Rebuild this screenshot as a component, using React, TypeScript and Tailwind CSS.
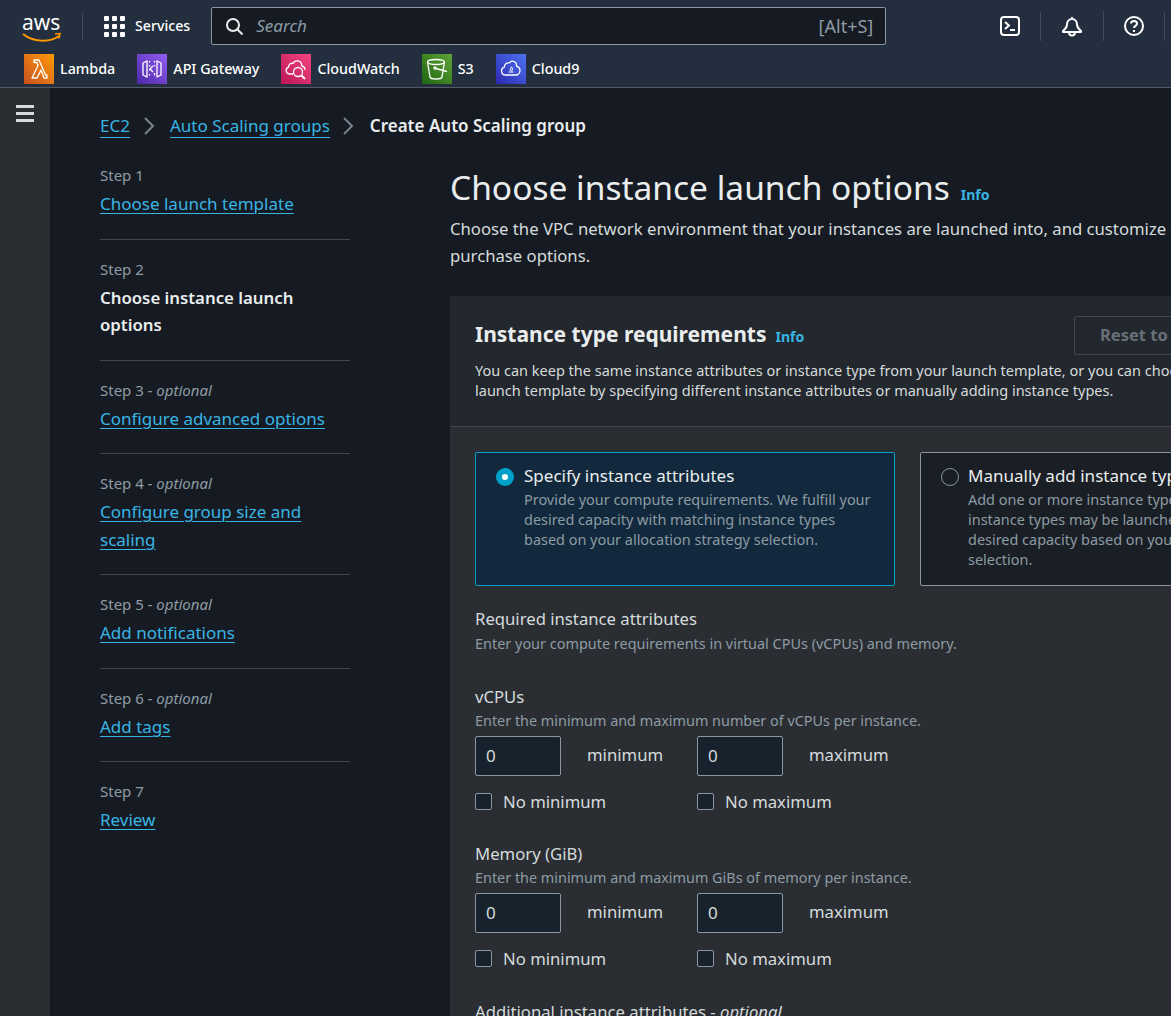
const services = [
  { name: 'Lambda', bg: 'bg-linear-to-bl from-[#f90] to-[#c8511b]', kind: 'lambda' },
  { name: 'API Gateway', bg: 'bg-linear-to-bl from-[#945df2] to-[#4d27a8]', kind: 'api' },
  { name: 'CloudWatch', bg: 'bg-linear-to-bl from-[#f34482] to-[#bc1356]', kind: 'watch' },
  { name: 'S3', bg: 'bg-linear-to-bl from-[#60a337] to-[#1b660f]', kind: 's3' },
  { name: 'Cloud9', bg: 'bg-linear-to-bl from-[#4d72f3] to-[#2e27ad]', kind: 'cloud9' },
]

const steps = [
  { label: 'Step 1', title: 'Choose launch template' },
  { label: 'Step 2', title: 'Choose instance launch options', current: true },
  { label: 'Step 3', optional: true, title: 'Configure advanced options' },
  { label: 'Step 4', optional: true, title: 'Configure group size and scaling' },
  { label: 'Step 5', optional: true, title: 'Add notifications' },
  { label: 'Step 6', optional: true, title: 'Add tags' },
  { label: 'Step 7', title: 'Review' },
]

function ServiceIcon({ kind }: { kind: string }) {
  return (
    <svg viewBox="0 0 30 30" className="h-[30px] w-[30px]" fill="none" stroke="#fff" strokeWidth="1.3">
      {kind === 'lambda' && <path d="M8 24h5l4-8 3 8h3v-3h-1.500L15 6h-5v2.500h3l1 3z" strokeLinejoin="round" />}
      {kind === 'api' && (
        <g strokeLinejoin="round">
          <path d="M10 7 6 9v12l4 2zM20 7l4 2v12l-4 2z" />
          <path d="M12.500 7v1.500M12.500 11v1.500M12.500 15v1.500M12.500 20v1.500M17.500 7v1.500M17.500 11v1.500M17.500 19v2.500" />
          <path d="m16 12-3 3 3 3" />
        </g>
      )}
      {kind === 'watch' && (
        <g strokeLinejoin="round">
          <path d="M12 20H8.500a3.500 3.500 0 0 1-1-6.800c0-3 2.500-4.500 4.500-3.700 1-2 3-3 5-2.600 2.500.5 3.800 2.500 3.800 5 2 .5 3.200 2 3.200 3.800" />
          <circle cx="17" cy="18" r="4.500" />
          <path d="m20.500 21.500 3.500 3.500" strokeWidth="2" />
        </g>
      )}
      {kind === 's3' && (
        <g strokeLinejoin="round">
          <ellipse cx="14" cy="8" rx="8.500" ry="2.500" />
          <path d="M5.500 8 8 23c.3 1.500 3 2 6 2s5.700-.5 6-2l2.500-15" />
          <circle cx="13" cy="14" r="1" />
          <path d="m14 14.500 11 3" />
        </g>
      )}
      {kind === 'cloud9' && (
        <g strokeLinejoin="round">
          <path d="M9.500 21a4 4 0 0 1-1.200-7.800c0-3 2.500-5 5-4.200 1-1.600 3-2.200 4.700-1.500 2 .8 2.800 2.800 2.500 4.800 2.200.4 3.500 2 3.500 4.200 0 2.500-2 4.500-4.500 4.500z" />
          <path d="M16.500 14.500a1.300 1.300 0 1 0-1 2.200c1 0 1.300-1 1-2.200-.2-1-1-1.800-2-1.500M12.500 18h5" strokeWidth="1" />
        </g>
      )}
    </svg>
  )
}

function RangeField({ label, hint }: { label: string; hint: string }) {
  return (
    <div>
      <div className="text-[16.700px] leading-[24px] text-[#d5dbdb]">{label}</div>
      <div className="mt-[0.500px] whitespace-nowrap text-[14.400px] leading-[22px] text-[#8d9ba3]">{hint}</div>
      <div className="mt-[4px] flex">
        {['minimum', 'maximum'].map((word) => (
          <div key={word} className="w-[222px] shrink-0">
            <div className="flex h-[40px] items-center">
              <input
                readOnly
                value="0"
                className="h-[40px] w-[86px] rounded-[2px] border border-[#8c96a3] bg-[#18222d] px-[10px] text-[17px] text-[#d5dbdb] outline-none"
              />
              <span className="ml-[26px] pb-[2px] text-[16.700px] text-[#d5dbdb]">{word}</span>
            </div>
            <div className="mt-[16px] flex h-[20px] items-center">
              <span className="h-[17px] w-[17px] rounded-[2px] border border-[#8c96a3] bg-[#18222d]" />
              <span className="ml-[11px] text-[16.700px] text-[#d5dbdb]">No {word}</span>
            </div>
          </div>
        ))}
      </div>
    </div>
  )
}

export default function App() {
  return (
    <div className="flex h-[1016px] w-full flex-col overflow-hidden bg-[#161b23] font-['Noto_Sans',sans-serif] text-[#d5dbdb]">
      {/* Top nav */}
      <header className="h-[88px] shrink-0 border-b border-[#545b64] bg-[#232f3e]">
        <div className="flex h-[52px] items-center">
          <div className="relative ml-[22px] h-[36px] w-[40px] shrink-0">
            <span className="absolute left-0 top-[3px] text-[21px] leading-[22px] text-white">aws</span>
            <svg viewBox="0 0 40 12" className="absolute left-0 top-[24px] h-[12px] w-[40px]" fill="none">
              <path d="M1 2c10 8 26 9 36 2" stroke="#f90" strokeWidth="2" />
              <path d="m33 2 5-.500-1 5" stroke="#f90" strokeWidth="1.500" />
            </svg>
          </div>
          <div className="ml-[20px] h-[27px] w-px bg-[#414d5c]" />
          <div className="ml-[21px] grid grid-cols-3 gap-[3px]">
            {Array.from({ length: 9 }).map((_, i) => (
              <span key={i} className="h-[5px] w-[5px] rounded-[1px] bg-white" />
            ))}
          </div>
          <span className="ml-[10px] text-[14.200px] font-medium text-white">Services</span>
          <div className="ml-[21px] flex h-[38px] w-[675px] shrink-0 items-center rounded-[2px] border border-[#8c96a3] bg-[#161b23] pl-[12px] pr-[12px]">
            <svg viewBox="0 0 20 20" className="h-[20px] w-[20px]" fill="none" stroke="#eaeded" strokeWidth="2">
              <circle cx="9" cy="9" r="6" />
              <path d="m13.500 13.500 5 5" />
            </svg>
            <span className="ml-[12px] text-[17px] italic text-[#8d9ba3]">Search</span>
            <span className="ml-auto text-[18px] text-[#8d9ba3]">[Alt+S]</span>
          </div>
          <div className="ml-[114px] flex items-center">
            <svg viewBox="0 0 20 20" className="h-[20px] w-[20px]" fill="none" stroke="#fff" strokeWidth="2">
              <rect x="1" y="1" width="18" height="18" rx="3" />
              <path d="m5 6 4 3.500L5 13M10 14h5" />
            </svg>
            <div className="ml-[20px] h-[29px] w-px bg-[#414d5c]" />
            <svg viewBox="0 0 22 22" className="ml-[20px] h-[22px] w-[22px]" fill="none" stroke="#fff" strokeWidth="2" strokeLinejoin="round">
              <path d="M11 2v2M11 4c-3 0-5 2.300-5 5.500 0 2.500-1.500 4.500-4 6.500v1h18v-1c-2.500-2-4-4-4-6.500C16 6.300 14 4 11 4z" />
              <path d="M8 17.500c0 1.800 1.300 3 3 3s3-1.200 3-3" />
            </svg>
            <div className="ml-[20px] h-[30px] w-px bg-[#414d5c]" />
            <svg viewBox="0 0 22 22" className="ml-[19px] h-[22px] w-[22px]" fill="none" stroke="#fff" strokeWidth="2">
              <circle cx="11" cy="11" r="9" />
              <path d="M8 8.500C8 6.800 9.300 6 11 6s3 1 3 2.500c0 2.500-3 2.200-3 4.500M11 15v2" />
            </svg>
            <div className="ml-[19px] h-[29px] w-px bg-[#414d5c]" />
          </div>
        </div>
        <div className="flex h-[35px] items-start pl-[24px] pt-[2px]">
          {services.map((service) => (
            <div key={service.name} className="mr-[22px] flex items-center">
              <div className={`h-[30px] w-[30px] ${service.bg}`}>
                <ServiceIcon kind={service.kind} />
              </div>
              <span className="ml-[6px] text-[14.300px] font-medium text-white">{service.name}</span>
            </div>
          ))}
        </div>
      </header>

      <div className="flex min-h-0 flex-1">
        {/* Side rail */}
        <div className="w-[50px] shrink-0 bg-[#2a2e33] pl-[16px] pt-[17px]">
          <div className="flex w-[18px] flex-col gap-[4px]">
            <span className="h-[3px] bg-[#d5dbdb]" />
            <span className="h-[3px] bg-[#d5dbdb]" />
            <span className="h-[3px] bg-[#d5dbdb]" />
          </div>
        </div>

        <main className="min-w-0 flex-1 pl-[50px] pt-[24px]">
          {/* Breadcrumbs */}
          <nav className="flex h-[28px] items-center whitespace-nowrap text-[17px]">
            <a className="border-b border-[#39b5e3] leading-[23px] text-[#39b5e3]">EC2</a>
            <svg viewBox="0 0 12 20" className="ml-[13px] mr-[15px] h-[20px] w-[12px]" fill="none" stroke="#7a838c" strokeWidth="2">
              <path d="m2 2 8 8-8 8" />
            </svg>
            <a className="border-b border-[#39b5e3] leading-[23px] text-[#39b5e3]">Auto Scaling groups</a>
            <svg viewBox="0 0 12 20" className="ml-[12px] mr-[16px] h-[20px] w-[12px]" fill="none" stroke="#7a838c" strokeWidth="2">
              <path d="m2 2 8 8-8 8" />
            </svg>
            <span className="font-semibold text-[#eaeded]">Create Auto Scaling group</span>
          </nav>

          <div className="mt-[6px] flex">
            {/* Wizard steps */}
            <ol className="w-[250px] shrink-0">
              {steps.map((step, index) => (
                <li
                  key={step.label}
                  className={`pb-[21px] pt-[17px] ${index < steps.length - 1 ? 'border-b border-[#414750]' : ''}`}
                >
                  <div className="text-[15px] leading-[24px] text-[#8d9ba3]">
                    {step.label}
                    {step.optional && <i> - optional</i>}
                  </div>
                  {step.current ? (
                    <div className="mt-[3px] text-[16.800px] font-semibold leading-[27.500px] text-[#eaeded]">{step.title}</div>
                  ) : (
                    <div className="mt-[3px] text-[17px] leading-[27.500px]">
                      <a className="text-[#39b5e3] underline decoration-1 underline-offset-[3px]">{step.title}</a>
                    </div>
                  )}
                </li>
              ))}
            </ol>

            {/* Main form */}
            <div className="ml-[100px] w-[900px] shrink-0">
              <div className="mt-[19px] flex items-baseline">
                <h1 className="whitespace-nowrap text-[33.500px] leading-[44px] text-[#eaeded]">Choose instance launch options</h1>
                <a className="ml-[11px] text-[14px] font-bold text-[#39b5e3]">Info</a>
              </div>
              <p className="mt-[6px] text-[16.700px] leading-[27px] text-[#d5dbdb]">
                <span className="whitespace-nowrap">Choose the VPC network environment that your instances are launched into, and customize the instance type and</span>
                <br />
                purchase options.
              </p>

              <section className="mt-[27px] bg-[#2a2e33]">
                <div className="border-b border-[#414750] bg-[#23272e] px-[25px] pb-[26px] pt-[20px]">
                  <div className="flex items-start">
                    <div className="flex w-[599px] shrink-0 items-baseline">
                      <h2 className="whitespace-nowrap text-[21px] font-bold leading-[36px] text-[#eaeded]">Instance type requirements</h2>
                      <a className="ml-[9px] text-[14px] font-bold text-[#39b5e3]">Info</a>
                    </div>
                    <button className="h-[39px] whitespace-nowrap rounded-[2px] border border-[#414750] px-[25px] text-[16.500px] font-bold text-[#687078]">
                      Reset to launch template
                    </button>
                  </div>
                  <p className="mt-[5px] whitespace-nowrap text-[14.500px] leading-[20px] text-[#d5dbdb]">
                    You can keep the same instance attributes or instance type from your launch template, or you can choose to override the
                    <br />
                    launch template by specifying different instance attributes or manually adding instance types.
                  </p>
                </div>

                <div className="px-[25px] pt-[25px]">
                  <div className="flex gap-[25px]">
                    <div className="h-[134px] w-[420px] shrink-0 rounded-[2px] border border-[#00a1c9] bg-[#12293d] pl-[20px] pt-[10px]">
                      <div className="flex">
                        <span className="mt-[5px] flex h-[18px] w-[18px] items-center justify-center rounded-full bg-[#00a1c9]">
                          <span className="h-[6px] w-[6px] rounded-full bg-white" />
                        </span>
                        <div className="ml-[10px]">
                          <div className="text-[17px] leading-[26px] text-[#eaeded]">Specify instance attributes</div>
                          <div className="mt-[1px] text-[14.450px] leading-[20px] text-[#8d9ba3]">
                            Provide your compute requirements. We fulfill your
                            <br />
                            desired capacity with matching instance types
                            <br />
                            based on your allocation strategy selection.
                          </div>
                        </div>
                      </div>
                    </div>
                    <div className="h-[134px] w-[420px] shrink-0 rounded-[2px] border border-[#8c96a3] bg-[#1a1f26] pl-[20px] pt-[10px]">
                      <div className="flex">
                        <span className="mt-[5px] h-[18px] w-[18px] rounded-full border border-[#8c96a3]" />
                        <div className="ml-[9px] whitespace-nowrap">
                          <div className="text-[17px] leading-[26px] text-[#eaeded]">Manually add instance types</div>
                          <div className="mt-[1px] text-[14.450px] leading-[20px] text-[#8d9ba3]">
                            Add one or more instance types. Any of these
                            <br />
                            instance types may be launched to fulfill your
                            <br />
                            desired capacity based on your allocation strategy
                            <br />
                            selection.
                          </div>
                        </div>
                      </div>
                    </div>
                  </div>

                  <div className="mt-[21px] text-[16.700px] leading-[24px] text-[#d5dbdb]">Required instance attributes</div>
                  <div className="mt-[2px] text-[14.450px] leading-[22px] text-[#8d9ba3]">
                    Enter your compute requirements in virtual CPUs (vCPUs) and memory.
                  </div>

                  <div className="mt-[30px]">
                    <RangeField label="vCPUs" hint="Enter the minimum and maximum number of vCPUs per instance." />
                  </div>
                  <div className="mt-[30.500px]">
                    <RangeField label="Memory (GiB)" hint="Enter the minimum and maximum GiBs of memory per instance." />
                  </div>
                  <div className="mt-[31px] text-[16.700px] leading-[24px] text-[#d5dbdb]">
                    Additional instance attributes - <i>optional</i>
                  </div>
                </div>
              </section>
            </div>
          </div>
        </main>
      </div>
    </div>
  )
}
